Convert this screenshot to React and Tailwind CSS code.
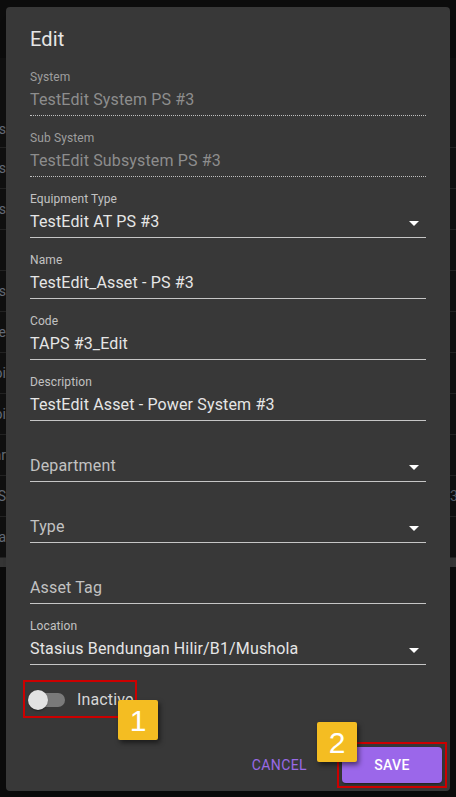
import React from "react";

const font = { fontFamily: "Roboto, 'Noto Sans', sans-serif" };

function Arrow() {
  return (
    <svg className="absolute right-0 top-[5px] w-6 h-6" viewBox="0 0 24 24" fill="#ffffff">
      <path d="M7 10l5 5 5-5z" />
    </svg>
  );
}

function Field({ label, value, disabled, select, placeholder }) {
  const boxClass = disabled
    ? "relative mt-[1px] h-[32px] pt-1 border-b border-dotted border-[#c0c0c0]"
    : "relative mt-[1px] h-[32px] pt-1 border-b border-[#c6c6c6]";
  return (
    <div className="pt-[16px]">
      <div
        className={
          disabled
            ? "h-3 text-[12px] leading-3 tracking-[0.11px] text-[#9e9e9e]"
            : "h-3 text-[12px] leading-3 tracking-[0.11px] text-[#c2c2c2]"
        }
      >
        {placeholder ? "" : label}
      </div>
      <div className={boxClass}>
        <div
          className={
            placeholder
              ? "h-[23px] text-[16px] leading-[23px] tracking-[0.15px] text-[#c2c2c2]"
              : disabled
              ? "h-[23px] text-[16px] leading-[23px] tracking-[0.15px] text-[#8d8d8d]"
              : "h-[23px] text-[16px] leading-[23px] tracking-[0.15px] text-[#e6e6e6]"
          }
        >
          {placeholder ? label : value}
        </div>
        {select ? <Arrow /> : null}
      </div>
    </div>
  );
}

const rows = [
  ["Pos", ""],
  ["Pos", ""],
  ["", ""],
  ["Pos", ""],
  ["Ice", ""],
  ["Poi", ""],
  ["Poi", ""],
  ["Bar", ""],
  ["t S", "3"],
  ["Pa", ""],
];

export default function App() {
  return (
    <div className="relative w-[456px] h-[797px] overflow-hidden bg-[#0d0d0d]" style={font}>
      {/* background page */}
      <div className="flex flex-col">
        <div className="h-[58px] bg-[#0d0d0d]" />
        <div className="h-[90px] bg-[#121212] border-b border-[#262626] flex items-end pb-[7px]">
          <div className="w-[6px] overflow-hidden flex justify-end">
            <span className="whitespace-nowrap text-[14px] text-[#6c7480]">Ss</span>
          </div>
        </div>
        {rows.map((r, i) => (
          <div key={i} className="h-[41px] bg-[#121212] border-b border-[#262626] flex items-center justify-between">
            <div className="w-[6px] overflow-hidden flex justify-end">
              <span className="whitespace-nowrap text-[14px] text-[#6c7480]">{r[0]}</span>
            </div>
            <div className="w-[6px] overflow-hidden flex justify-start">
              <span className="whitespace-nowrap text-[14px] text-[#5c6470]">{r[1]}</span>
            </div>
          </div>
        ))}
        <div className="h-[9px] bg-[#3a3a3a]" />
      </div>

      {/* dialog */}
      <div className="absolute left-[6px] top-[7px] w-[444px] h-[784px] rounded-[4px] bg-[#383838] flex flex-col shadow-[0_11px_15px_-7px_rgba(0,0,0,0.2),0_24px_38px_3px_rgba(0,0,0,0.14)]">
        <div className="px-6 pt-4 h-[48px] text-[20px] leading-8 tracking-[0.15px] text-[#e6e6e6]">Edit</div>
        <div className="px-6 flex flex-col">
          <Field label="System" value="TestEdit System PS #3" disabled />
          <Field label="Sub System" value="TestEdit Subsystem PS #3" disabled />
          <Field label="Equipment Type" value="TestEdit AT PS #3" select />
          <Field label="Name" value="TestEdit_Asset - PS #3" />
          <Field label="Code" value="TAPS #3_Edit" />
          <Field label="Description" value="TestEdit Asset - Power System #3" />
          <Field label="Department" placeholder select />
          <Field label="Type" placeholder select />
          <Field label="Asset Tag" placeholder />
          <Field label="Location" value="Stasius Bendungan Hilir/B1/Mushola" select />
          <div className="mt-4 h-[38px] flex items-center">
            <div className="relative w-[58px] h-[38px] -ml-[11px]">
              <div className="absolute left-3 top-3 w-[34px] h-[14px] rounded-full bg-[#7a7a7a]" />
              <div className="absolute left-[9px] top-[9px] w-5 h-5 rounded-full bg-[#e2e2e2] shadow-[0_2px_1px_-1px_rgba(0,0,0,0.2),0_1px_1px_0_rgba(0,0,0,0.14),0_1px_3px_0_rgba(0,0,0,0.12)]" />
            </div>
            <span className="text-[16px] leading-6 tracking-[0.15px] text-[#d6d6d6]">Inactive</span>
          </div>
        </div>
        <div className="mt-auto p-2 flex justify-end items-center gap-[27px]">
          <button className="h-9 px-2 text-[14px] font-normal tracking-[0.4px] text-[#9a6ae6]">CANCEL</button>
          <button className="h-9 w-[100px] rounded-[4px] bg-[#9b67ea] text-[14px] font-medium tracking-[0.4px] text-white shadow-[0_3px_1px_-2px_rgba(0,0,0,0.2),0_2px_2px_0_rgba(0,0,0,0.14),0_1px_5px_0_rgba(0,0,0,0.12)]">
            SAVE
          </button>
        </div>
      </div>

      {/* annotations */}
      <div className="absolute left-[23px] top-[680px] w-[114px] h-[38px] border-2 border-[#cc0000]" />
      <div className="absolute left-[337px] top-[742px] w-[110px] h-[46px] border-2 border-[#cc0000]" />
      <div
        className="absolute left-[118px] top-[700px] w-10 h-10 rounded-[2px] bg-[#f4bd22] flex items-center justify-center text-white text-[30px] shadow-[2px_3px_5px_rgba(0,0,0,0.5)]"
        style={{ fontFamily: "'Liberation Sans', Arial, sans-serif" }}
      >
        1
      </div>
      <div
        className="absolute left-[317px] top-[722px] w-10 h-10 rounded-[2px] bg-[#f4bd22] flex items-center justify-center text-white text-[30px] shadow-[2px_3px_5px_rgba(0,0,0,0.5)]"
        style={{ fontFamily: "'Liberation Sans', Arial, sans-serif" }}
      >
        2
      </div>
    </div>
  );
}
